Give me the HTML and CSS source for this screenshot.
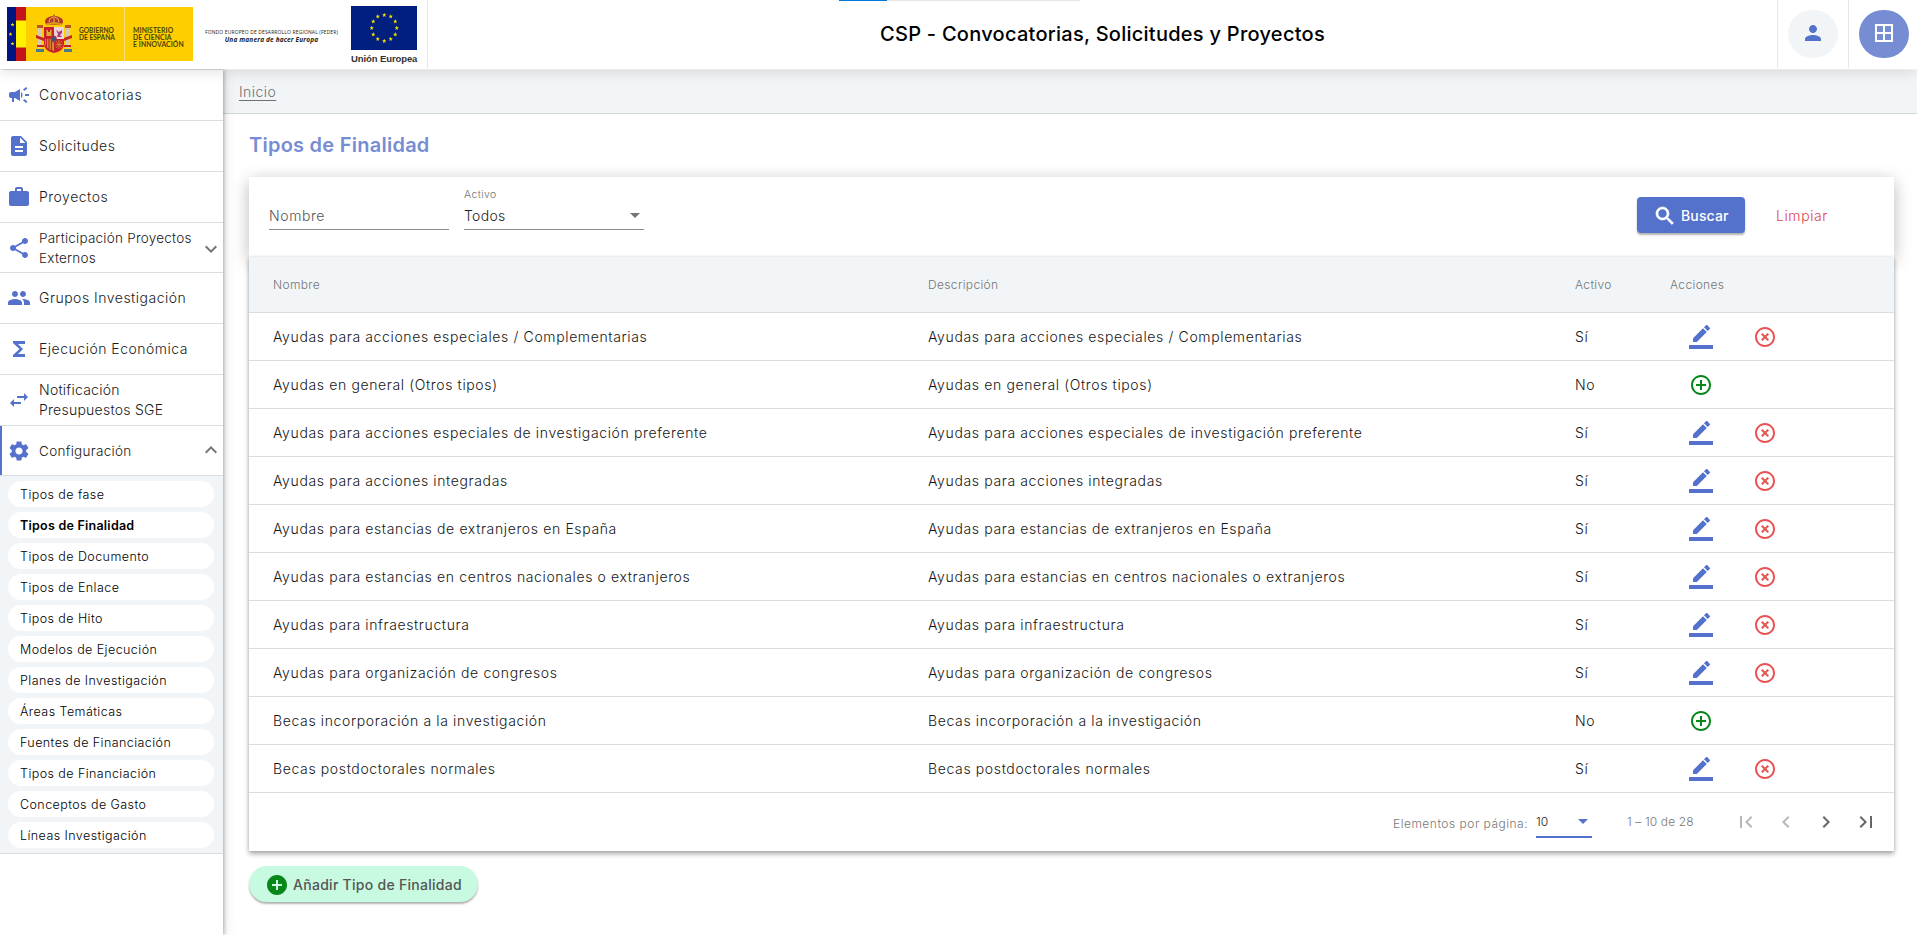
FILE: index.html
```
<!DOCTYPE html>
<html lang="es">
<head>
<meta charset="utf-8">
<title>CSP - Convocatorias, Solicitudes y Proyectos</title>
<link rel="stylesheet" href="styles.css">
</head>
<body>
<svg class="defs" width="0" height="0">
  <symbol id="i-campaign" viewBox="0 0 24 24"><path d="M18 11v2h4v-2h-4zm-2 6.61c.96.71 2.21 1.65 3.2 2.39.4-.53.8-1.07 1.2-1.6-.99-.74-2.24-1.68-3.2-2.4-.4.54-.8 1.08-1.2 1.61zM20.4 5.6c-.4-.53-.8-1.07-1.2-1.6-.99.74-2.24 1.68-3.2 2.4.4.53.8 1.07 1.2 1.6.96-.72 2.21-1.65 3.2-2.4zM4 9c-1.1 0-2 .9-2 2v2c0 1.1.9 2 2 2h1v4h2v-4h1l5 3V6L8 9H4zm11.5 3c0-1.33-.58-2.53-1.5-3.35v6.69c.92-.81 1.5-2.01 1.5-3.34z"/></symbol>
  <symbol id="i-doc" viewBox="0 0 24 24"><path d="M14 2H6c-1.1 0-1.99.9-1.99 2L4 20c0 1.1.89 2 1.99 2H18c1.1 0 2-.9 2-2V8l-6-6zm2 16H8v-2h8v2zm0-4H8v-2h8v2zm-3-5V3.5L18.5 9H13z"/></symbol>
  <symbol id="i-work" viewBox="0 0 24 24"><path d="M20 6h-4V4c0-1.11-.89-2-2-2h-4c-1.11 0-2 .89-2 2v2H4c-1.11 0-1.99.89-1.99 2L2 19c0 1.11.89 2 2 2h16c1.11 0 2-.89 2-2V8c0-1.11-.89-2-2-2zm-6 0h-4V4h4v2z"/></symbol>
  <symbol id="i-share" viewBox="0 0 24 24"><path d="M18 16.08c-.76 0-1.44.3-1.96.77L8.91 12.7c.05-.23.09-.46.09-.7s-.04-.47-.09-.7l7.05-4.11c.54.5 1.25.81 2.04.81 1.66 0 3-1.34 3-3s-1.34-3-3-3-3 1.34-3 3c0 .24.04.47.09.7L8.04 9.81C7.5 9.31 6.79 9 6 9c-1.66 0-3 1.34-3 3s1.34 3 3 3c.79 0 1.5-.31 2.04-.81l7.12 4.16c-.05.21-.08.43-.08.65 0 1.61 1.31 2.92 2.92 2.92s2.92-1.31 2.92-2.92-1.31-2.92-2.92-2.92z"/></symbol>
  <symbol id="i-group" viewBox="0 0 24 24"><path d="M16 11c1.66 0 2.99-1.34 2.99-3S17.66 5 16 5s-3 1.34-3 3 1.34 3 3 3zm-8 0c1.66 0 2.99-1.34 2.99-3S9.66 5 8 5 5 6.340 5 8s1.34 3 3 3zm0 2c-2.330 0-7 1.170-7 3.500V19h14v-2.500c0-2.330-4.670-3.500-7-3.500zm8 0c-.29 0-.62.020-.97.050 1.160.840 1.970 1.970 1.970 3.450V19h6v-2.500c0-2.330-4.670-3.500-7-3.500z"/></symbol>
  <symbol id="i-sigma" viewBox="0 0 24 24"><path d="M18 4H6v2l6.500 6L6 18v2h12v-3h-7l5-5-5-5h7z"/></symbol>
  <symbol id="i-swap" viewBox="0 0 24 24"><path d="M6.990 11L3 15l3.990 4v-3H14v-2H6.990v-3zM21 9l-3.990-4v3H10v2h7.010v3L21 9z"/></symbol>
  <symbol id="i-gear" viewBox="0 0 24 24"><path d="M19.140 12.940c.04-.3.06-.61.06-.94 0-.32-.02-.64-.07-.94l2.030-1.580c.18-.14.23-.41.12-.61l-1.920-3.320c-.12-.22-.37-.29-.59-.22l-2.390.96c-.5-.38-1.030-.7-1.620-.94l-.36-2.540c-.04-.24-.24-.41-.48-.41h-3.840c-.24 0-.43.17-.47.41l-.36 2.540c-.59.24-1.130.57-1.620.94l-2.390-.96c-.22-.08-.47 0-.59.22L2.740 8.870c-.12.21-.08.47.12.61l2.030 1.580c-.05.3-.09.63-.09.94s.02.640.07.940l-2.030 1.580c-.18.14-.23.41-.12.61l1.920 3.320c.12.22.37.29.59.22l2.390-.96c.5.38 1.030.7 1.620.94l.36 2.540c.05.24.24.41.48.41h3.840c.24 0 .44-.17.47-.41l.36-2.540c.59-.24 1.130-.56 1.620-.94l2.390.96c.22.08.47 0 .59-.22l1.920-3.320c.12-.22.07-.47-.12-.61l-2.010-1.580zM12 15.600c-1.980 0-3.600-1.620-3.600-3.600s1.620-3.600 3.600-3.600 3.600 1.620 3.600 3.600-1.620 3.600-3.600 3.600z"/></symbol>
  <symbol id="i-down" viewBox="0 0 24 24"><path d="M7.410 8.590L12 13.170l4.590-4.580L18 10l-6 6-6-6z"/></symbol>
  <symbol id="i-up" viewBox="0 0 24 24"><path d="M7.410 15.410L12 10.830l4.590 4.580L18 14l-6-6-6 6z"/></symbol>
  <symbol id="i-person" viewBox="0 0 24 24"><path d="M12 12c2.210 0 4-1.790 4-4s-1.790-4-4-4-4 1.790-4 4 1.790 4 4 4zm0 2c-2.670 0-8 1.340-8 4v2h16v-2c0-2.660-5.330-4-8-4z"/></symbol>
  <symbol id="i-window" viewBox="0 0 24 24"><path d="M3 3v18h18V3H3zm8 16H5v-6h6v6zm0-8H5V5h6v6zm8 8h-6v-6h6v6zm0-8h-6V5h6v6z"/></symbol>
  <symbol id="i-search" viewBox="0 0 24 24"><path d="M15.500 14h-.79l-.28-.27C15.410 12.590 16 11.110 16 9.500 16 5.910 13.090 3 9.500 3S3 5.910 3 9.500 5.910 16 9.500 16c1.610 0 3.090-.59 4.230-1.570l.27.28v.79l5 4.990L20.490 19l-4.990-5zm-6 0C7.010 14 5 11.990 5 9.500S7.010 5 9.500 5 14 7.010 14 9.500 11.990 14 9.500 14z"/></symbol>
  <symbol id="i-edit" viewBox="0 0 24 24"><path d="M17.750 7L14 3.250l-10 10V17h3.750l10-10zm2.960-2.960c.39-.39.39-1.020 0-1.410L18.370.29c-.39-.39-1.020-.39-1.410 0L15 2.250 18.750 6l1.960-1.960zM0 20h24v4H0z"/></symbol>
  <symbol id="i-cancel" viewBox="0 0 24 24"><path d="M14.590 8L12 10.590 9.410 8 8 9.410 10.590 12 8 14.590 9.410 16 12 13.410 14.590 16 16 14.590 13.410 12 16 9.410 14.590 8zM12 2C6.470 2 2 6.470 2 12s4.470 10 10 10 10-4.470 10-10S17.530 2 12 2zm0 18c-4.410 0-8-3.590-8-8s3.590-8 8-8 8 3.590 8 8-3.590 8-8 8z"/></symbol>
  <symbol id="i-add" viewBox="0 0 24 24"><path d="M13 7h-2v4H7v2h4v4h2v-4h4v-2h-4V7zm-1-5C6.480 2 2 6.480 2 12s4.480 10 10 10 10-4.480 10-10S17.520 2 12 2zm0 18c-4.410 0-8-3.590-8-8s3.590-8 8-8 8 3.590 8 8-3.590 8-8 8z"/></symbol>
  <symbol id="i-addfill" viewBox="0 0 24 24"><path d="M12 2C6.480 2 2 6.480 2 12s4.480 10 10 10 10-4.480 10-10S17.520 2 12 2zm5 11h-4v4h-2v-4H7v-2h4V7h2v4h4v2z"/></symbol>
  <symbol id="i-first" viewBox="0 0 24 24"><path d="M18.410 16.590L13.820 12l4.590-4.590L17 6l-6 6 6 6zM6 6h2v12H6z"/></symbol>
  <symbol id="i-prev" viewBox="0 0 24 24"><path d="M15.410 7.410L14 6l-6 6 6 6 1.410-1.410L10.830 12z"/></symbol>
  <symbol id="i-next" viewBox="0 0 24 24"><path d="M10 6L8.590 7.410 13.170 12l-4.580 4.590L10 18l6-6z"/></symbol>
  <symbol id="i-last" viewBox="0 0 24 24"><path d="M5.590 7.410L10.180 12l-4.590 4.590L7 18l6-6-6-6zM16 6h2v12h-2z"/></symbol>
  <symbol id="star" viewBox="0 0 10 10"><path d="M5 0l1.200 3.700H10L7 6l1.100 3.800L5 7.500 1.900 9.800 3 6 0 3.700h3.800z"/></symbol>
</svg>

<header class="topbar">
  <div class="logos">
    <div class="gob">
      <svg class="flags" width="19" height="54" viewBox="0 0 19 54">
        <rect width="9" height="54" fill="#00157f"/><rect x="9" width="10" height="54" fill="#c4141b"/><rect x="9" y="13.500" width="10" height="27" fill="#fff200"/>
        <g fill="#ffe500"><use href="#star" x="3.500" y="15.500" width="4" height="4"/><use href="#star" x="1.500" y="25" width="4" height="4"/><use href="#star" x="3.500" y="34.500" width="4" height="4"/></g>
      </svg>
      <svg class="crest" width="38" height="40" viewBox="0 0 38 40">
        <path d="M11 11q-3-6 3-8 2-1 4-1l1-2 1 2q2 0 4 1 6 2 3 8z" fill="#b5352a"/>
        <path d="M11 9.500q8-3 16 0v2q-8-2-16 0z" fill="#d99a1c"/>
        <path d="M14 8q0-4 4-5M24 8q0-4-4-5M19 2v6" stroke="#e8c34a" fill="none"/>
        <path d="M3 13h4v21H3zM31 13h4v21h-4z" fill="#d9c9b0"/>
        <path d="M2 11h6v3H2zM30 11h6v3h-6z" fill="#b8561d"/>
        <path d="M1 35h8v3H1zM29 35h8v3h-8z" fill="#4a7a8f"/>
        <path d="M1 21l8 3v3l-8-3zM29 24l8-3v3l-8 3zM2 31h7v2H2zM29 31h7v2h-7z" fill="#c4251d"/>
        <path d="M9 13h20v17q0 7-10 9-10-2-10-9z" fill="#c9202b"/>
        <path d="M19 13h10v12H19z" fill="#ead3d9"/>
        <path d="M21 16l3 2 3-2v3l-2 2 2 2h-5l1-3z" fill="#b33c73"/>
        <path d="M11.500 22v-6h1.500v2h2v-2h1.500v6z" fill="#e0ad28"/>
        <path d="M10 25h9v12q-8-2-9-7z" fill="#d9922b"/><path d="M11.500 25v8M14 25v10M16.500 25v12" stroke="#be2329" stroke-width="1.200"/>
        <path d="M21 27l6 7M27 27l-6 7M24 26v9M20.500 30.500h7" stroke="#d28c2d" stroke-width=".8"/>
        <ellipse cx="19" cy="25" rx="2.400" ry="3" fill="#2b5b91" stroke="#b5352a"/>
      </svg>
      <div class="gob-text">GOBIERNO<br>DE ESPAÑA</div>
      <div class="min-text">MINISTERIO<br>DE CIENCIA<br>E INNOVACIÓN</div>
    </div>
    <div class="feder"><div class="feder-a">FONDO EUROPEO DE DESARROLLO REGIONAL (FEDER)</div><div class="feder-b">Una manera de hacer Europa</div></div>
    <div class="eu">
      <svg width="66" height="44" viewBox="0 0 66 44"><rect width="66" height="44" fill="#001f7e"/>
        <g fill="#f5e400"><use href="#star" x="31" y="6.500" width="4.500" height="4.500"/><use href="#star" x="37.500" y="8" width="4.500" height="4.500"/><use href="#star" x="42" y="13" width="4.500" height="4.500"/><use href="#star" x="43.500" y="19.500" width="4.500" height="4.500"/><use href="#star" x="42" y="26" width="4.500" height="4.500"/><use href="#star" x="37.500" y="30.500" width="4.500" height="4.500"/><use href="#star" x="31" y="32.500" width="4.500" height="4.500"/><use href="#star" x="24.500" y="30.500" width="4.500" height="4.500"/><use href="#star" x="20" y="26" width="4.500" height="4.500"/><use href="#star" x="18.500" y="19.500" width="4.500" height="4.500"/><use href="#star" x="20" y="13" width="4.500" height="4.500"/><use href="#star" x="24.500" y="8" width="4.500" height="4.500"/></g></svg>
      <div class="eu-text">Unión Europea</div>
    </div>
  </div>
  <h1 class="app-title">CSP - Convocatorias, Solicitudes y Proyectos</h1>
  <div class="top-actions">
    <div class="act"><span class="round light"><svg><use href="#i-person"/></svg></span></div>
    <div class="act"><span class="round blue"><svg><use href="#i-window"/></svg></span></div>
  </div>
  <div class="progress"><div class="progress-fill"></div></div>
</header>

<div class="body">
  <nav class="side">
    <a class="item"><svg><use href="#i-campaign"/></svg><span class="t-conv">Convocatorias</span></a>
    <a class="item"><svg><use href="#i-doc"/></svg><span>Solicitudes</span></a>
    <a class="item"><svg><use href="#i-work"/></svg><span>Proyectos</span></a>
    <a class="item fold"><svg><use href="#i-share"/></svg><span class="t-part">Participación Proyectos Externos</span><svg class="chev"><use href="#i-down"/></svg></a>
    <a class="item"><svg><use href="#i-group"/></svg><span>Grupos Investigación</span></a>
    <a class="item"><svg><use href="#i-sigma"/></svg><span>Ejecución Económica</span></a>
    <a class="item"><svg><use href="#i-swap"/></svg><span class="t-not">Notificación<br>Presupuestos SGE</span></a>
    <a class="item fold active"><svg><use href="#i-gear"/></svg><span class="t-conf">Configuración</span><svg class="chev"><use href="#i-up"/></svg></a>
    <div class="sub">
      <a class="pill">Tipos de fase</a><a class="pill current">Tipos de Finalidad</a><a class="pill">Tipos de Documento</a><a class="pill">Tipos de Enlace</a><a class="pill">Tipos de Hito</a><a class="pill">Modelos de Ejecución</a><a class="pill">Planes de Investigación</a><a class="pill">Áreas Temáticas</a><a class="pill">Fuentes de Financiación</a><a class="pill">Tipos de Financiación</a><a class="pill">Conceptos de Gasto</a><a class="pill">Líneas Investigación</a>
    </div>
  </nav>
  <main class="main">
    <div class="crumbs"><a>Inicio</a></div>
    <div class="content">
      <h2 class="title">Tipos de Finalidad</h2>
      <section class="filter">
        <div class="field"><span class="flabel"></span><span class="fvalue ph">Nombre</span></div>
        <div class="field"><span class="flabel">Activo</span><span class="fvalue">Todos<i class="caret"></i></span></div>
        <div class="buttons"><button class="search"><svg><use href="#i-search"/></svg>Buscar</button><button class="clear">Limpiar</button></div>
      </section>
      <section class="grid">
        <div class="row head"><span>Nombre</span><span>Descripción</span><span>Activo</span><span>Acciones</span></div>
        <div id="rows"></div>
        <div class="pager">
          <span class="per">Elementos por página:</span><span class="size">10<i class="caret"></i></span><span class="range">1 – 10 de 28</span>
          <svg class="off"><use href="#i-first"/></svg><svg class="off"><use href="#i-prev"/></svg><svg><use href="#i-next"/></svg><svg><use href="#i-last"/></svg>
        </div>
      </section>
      <button class="add"><svg><use href="#i-addfill"/></svg>Añadir Tipo de Finalidad</button>
    </div>
  </main>
</div>
<script src="app.js"></script>
</body>
</html>
```
FILE: styles.css
```
* { box-sizing: border-box; }
body { margin: 0; height: 935px; overflow: hidden; background: #fff; color: #161616; font-family: Inter, "Open Sans", sans-serif; font-size: 14px; font-weight: 300; display: flex; flex-direction: column; }
svg { display: block; flex: none; fill: currentColor; }
.defs { position: absolute; }
button { font: inherit; border: 0; background: none; display: flex; align-items: center; padding: 0; }

/* header */
.topbar { position: relative; z-index: 3; flex: none; height: 69px; background: #fff; display: flex; align-items: flex-start; box-shadow: 0 2px 14px rgba(0,0,0,.13); }
.logos { width: 428px; height: 68px; border-right: 1px solid #e8e8e8; display: flex; padding: 6px 0 0 7px; flex: none; }
.gob { width: 186px; height: 54px; margin-top: 1px; background: #ffce00; display: flex; align-items: flex-start; color: #4b4200; font-family: Lato, sans-serif; font-weight: 700; line-height: 7px; white-space: nowrap; }
.crest { margin: 7px 0 0 9px; }
.gob-text { width: 52px; height: 54px; padding: 20px 0 0 6px; font-size: 6.600px; border-right: 1px solid #fbe17b; }
.min-text { padding: 20px 0 0 8px; font-size: 6.800px; letter-spacing: .1px; }
.feder { width: 135px; margin: 23px 0 0 11px; text-align: center; white-space: nowrap; font-family: "Open Sans", sans-serif; color: #222; }
.feder-a { font-size: 5px; line-height: 7px; font-weight: 400; letter-spacing: .13px; }
.feder-b { font-size: 6.500px; line-height: 8px; font-weight: 700; font-style: italic; letter-spacing: .16px; }
.eu { width: 67px; margin-left: 12px; }
.eu-text { font: 700 9.500px/12px "Liberation Sans", sans-serif; margin-top: 3px; color: #333; letter-spacing: -.1px; white-space: nowrap; }
.app-title { flex: 1; margin: 0; text-align: center; font-size: 20px; font-weight: 500; line-height: 69px; color: #000; white-space: nowrap; letter-spacing: .26px; }
.top-actions { display: flex; }
.act { width: 71px; height: 68px; border-left: 1px solid #e8e8e8; padding: 10px 0 0 10px; }
.act:last-child { width: 69px; }
.round { width: 50px; height: 48px; border-radius: 25px; display: flex; align-items: center; justify-content: center; padding-bottom: 2px; }
.round svg { width: 24px; height: 24px; }
.light { background: #f1f5f8; color: #5472cb; }
.blue { background: #768dd3; color: #fff; }
.progress { position: absolute; left: 839px; top: 0; width: 241px; height: 1px; background: #e5e5e5; }
.progress-fill { width: 48px; height: 1px; background: #0078d7; }

.body { flex: 1; display: flex; margin-top: 1px; }

/* side menu */
.side { position: relative; z-index: 2; width: 223px; height: 865px; background: #fff; flex: none; box-shadow: 1px 0 4px rgba(0,0,0,.3), 3px 0 12px rgba(0,0,0,.08); }
.item { height: 51px; border-bottom: 1px solid #dcdfe0; display: flex; align-items: center; padding-left: 7px; line-height: 20px; color: #1a1a1a; }
.item svg { width: 24px; height: 24px; color: #5472cb; }
.item span { margin-left: 8px; width: 160px; white-space: nowrap; letter-spacing: .5px; }
.item .t-conv { letter-spacing: .75px; }
.item .t-not { letter-spacing: .25px; }
.fold { height: 50px; }
.item .t-part { white-space: normal; font-size: 13.500px; letter-spacing: .23px; }
.item .t-conf { font-size: 13.500px; letter-spacing: .3px; }
.item .chev { width: 24px; height: 24px; color: #757575; margin: 3px 0 0; }
.item.active .chev { margin-top: -2px; }
.active { box-shadow: inset 2px 0 #5472cb; }
.sub { background: #f1f5f8; border-bottom: 1px solid #d9dcde; padding: 5px 9px 5px 8px; display: flex; flex-direction: column; gap: 5px; }
.pill { height: 26px; border-radius: 13px; background: #fff; padding-left: 12px; line-height: 27px; font-size: 12.500px; color: #000; letter-spacing: .43px; white-space: nowrap; }
.current { font-weight: 600; letter-spacing: .24px; }

/* page */
.main { flex: 1; min-width: 0; }
.crumbs { height: 44px; background: #f1f5f8; border-bottom: 1px solid #d3d8db; padding-left: 16px; line-height: 44px; color: #707070; letter-spacing: .45px; }
.crumbs a { text-decoration: underline; text-underline-offset: 3px; }
.content { padding: 0 23px 0 26px; }
.title { margin: 0; height: 63px; line-height: 63px; font-size: 20px; font-weight: 600; color: #768dd3; letter-spacing: .25px; }
.filter { height: 80px; padding-left: 20px; display: flex; gap: 15px; background: #fff; box-shadow: 0 4px 16px rgba(0,0,0,.28); }
.field { width: 180px; height: 53px; border-bottom: 1px solid #8c8c8c; display: flex; flex-direction: column; }
.flabel { height: 29px; padding-top: 10px; font-size: 10.500px; line-height: 16px; color: #707070; letter-spacing: .4px; }
.fvalue { line-height: 19px; display: flex; align-items: center; justify-content: space-between; padding-right: 4px; color: #222; letter-spacing: .3px; }
.ph { color: #555; letter-spacing: .6px; }
.caret { border: 5px solid transparent; border-top-color: #757575; border-bottom: 0; }
.buttons { margin-left: auto; padding-top: 20px; display: flex; align-items: flex-start; }
.search { width: 108px; height: 36px; background: #5472cb; color: #fff; border-radius: 4px; padding-left: 16px; font-weight: 500; letter-spacing: .15px; box-shadow: 0 2px 2px rgba(0,0,0,.3); }
.search svg { width: 24px; height: 24px; margin: 2px 4px 0 0; stroke: #fff; stroke-width: .6; }
.clear { height: 36px; margin: 0 66px 0 31px; color: #e23f50; width: 52px; letter-spacing: .6px; }
.grid { position: relative; height: 594px; background: #fff; box-shadow: 0 3px 5px rgba(0,0,0,.33), 0 0 3px rgba(0,0,0,.12); }
.row { height: 48px; border-bottom: 1px solid #dcdcdc; display: grid; grid-template-columns: 655px 647px 95px 1fr; align-items: center; padding-left: 24px; white-space: nowrap; letter-spacing: .63px; }
.head { height: 56px; background: #f1f5f8; font-size: 12px; color: #757575; letter-spacing: .35px; }
.ops { display: flex; gap: 40px; padding: 1px 0 0 19px; }
.ops svg { width: 24px; height: 24px; }
.edit { color: #5472cb; }
.del { color: #e95353; }
.plus { color: #078718; }
.pager { height: 57px; display: flex; align-items: center; color: #787878; font-size: 12px; padding-right: 16px; justify-content: flex-end; }
.per { width: 143px; white-space: nowrap; letter-spacing: .5px; padding-top: 3px; }
.size { width: 56px; height: 31px; border-bottom: 2px solid #5472cb; color: #222; display: flex; align-items: center; justify-content: space-between; padding-right: 4px; margin-top: 2px; }
.size .caret { border-top-color: #5472cb; }
.range { width: 126px; padding-left: 35px; white-space: nowrap; letter-spacing: .12px; }
.pager svg { width: 24px; height: 24px; margin-left: 16px; color: #666; }
.pager .off { color: #b8b8b8; }
.add { height: 36px; width: 229px; margin-top: 15px; background: #c8fae1; border-radius: 18px; box-shadow: 0 2px 2px rgba(0,0,0,.3); padding-left: 16px; font-weight: 500; color: #555; white-space: nowrap; letter-spacing: .28px; }
.add svg { width: 24px; height: 24px; color: #078718; margin: 1px 4px 0 0; }
```
FILE: app.js
```
const rows = [
  ["Ayudas para acciones especiales / Complementarias", 1],
  ["Ayudas en general (Otros tipos)", 0],
  ["Ayudas para acciones especiales de investigación preferente", 1],
  ["Ayudas para acciones integradas", 1],
  ["Ayudas para estancias de extranjeros en España", 1],
  ["Ayudas para estancias en centros nacionales o extranjeros", 1],
  ["Ayudas para infraestructura", 1],
  ["Ayudas para organización de congresos", 1],
  ["Becas incorporación a la investigación", 0],
  ["Becas postdoctorales normales", 1]
];
const icon = (cls, id) => `<svg class="${cls}"><use href="#${id}"/></svg>`;
document.getElementById("rows").innerHTML = rows.map(([name, on]) =>
  `<div class="row"><span>${name}</span><span>${name}</span><span>${on ? "Sí" : "No"}</span><span class="ops">${on ? icon("edit", "i-edit") + icon("del", "i-cancel") : icon("plus", "i-add")}</span></div>`
).join("");
```
